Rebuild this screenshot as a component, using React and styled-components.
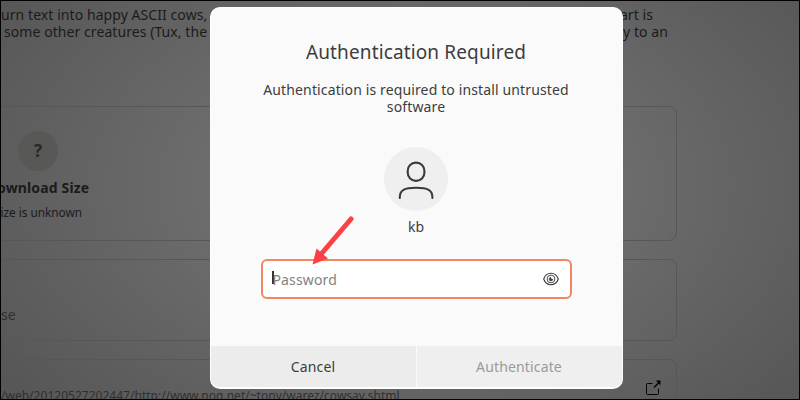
import React from "react";
import styled, { createGlobalStyle } from "styled-components";

const GlobalStyle = createGlobalStyle`
  * { box-sizing: border-box; }
  body { margin: 0; background: #000; font-family: "Noto Sans", "Open Sans", sans-serif; }
`;

const Screen = styled.div`
  position: relative;
  width: 800px;
  height: 400px;
  border: 1px solid #000;
  overflow: hidden;
  background: radial-gradient(ellipse 500px 320px at 410px 185px, #757575 0%, #6c6c6c 42%, #606060 75%, #575757 100%);
`;

const StorePage = styled.main`
  display: flex;
  flex-direction: column;
  width: 676px;
  color: #1b1b1b;
`;

const Summary = styled.section`
  height: 105px;
  padding-top: 5px;
`;

const SummaryLine = styled.div`
  display: flex;
  justify-content: space-between;
  height: 17px;
  line-height: 17px;
  font-size: 14px;
  letter-spacing: 0.07px;
  white-space: pre;
  padding-left: ${(p) => p.$start}px;
  padding-right: ${(p) => p.$end}px;
`;

const Card = styled.section`
  height: ${(p) => p.$height}px;
  margin-bottom: 18px;
  margin-left: -20px;
  padding-left: 19px;
  border: 1px solid #575757;
  border-radius: 8px;
  flex-shrink: 0;
`;

const Tile = styled.div`
  display: flex;
  flex-direction: column;
  align-items: center;
  width: 134px;
  margin-left: -30px;
  padding-top: 24px;
  white-space: nowrap;
`;

const TileBadge = styled.div`
  width: 40px;
  height: 40px;
  border-radius: 50%;
  background: #585856;
  color: #29292a;
  font-size: 17px;
  font-weight: 700;
  line-height: 39px;
  text-align: center;
`;

const TileTitle = styled.div`
  margin-top: 8px;
  height: 18px;
  line-height: 18px;
  font-size: 14px;
  font-weight: 700;
  letter-spacing: 0.15px;
`;

const TileNote = styled.div`
  margin-top: 7px;
  height: 16px;
  line-height: 16px;
  font-size: 11.8px;
`;

const License = styled.div`
  padding-top: 46px;
  line-height: 18px;
  font-size: 14px;
  color: #303030;
`;

const LinkRow = styled.div`
  display: flex;
  justify-content: space-between;
  padding: 20px 15px 0 0;
`;

const Address = styled.div`
  padding-top: 8px;
  line-height: 16px;
  font-size: 12px;
  letter-spacing: 0.02px;
  color: #303030;
  white-space: nowrap;
`;

const Dialog = styled.div`
  position: absolute;
  left: 209px;
  top: 6px;
  width: 413px;
  height: 382px;
  display: flex;
  flex-direction: column;
  border-radius: 10px;
  overflow: hidden;
  background: #fafafa;
  border: 1px solid #fefefe;
  border-bottom-width: 2px;
  color: #3d3d3d;
`;

const DialogBody = styled.div`
  flex: 1;
  display: flex;
  flex-direction: column;
  align-items: center;
  padding-right: 1px;
`;

const Title = styled.h1`
  margin: 30px 0 0;
  height: 28px;
  line-height: 28px;
  font-size: 19px;
  font-weight: 400;
  letter-spacing: 0.13px;
`;

const Message = styled.p`
  margin: 15px 0 0;
  text-align: center;
  font-size: 14px;
  line-height: 17px;
  letter-spacing: 0.13px;
`;

const Avatar = styled.div`
  width: 64px;
  height: 64px;
  margin-top: 32px;
  border-radius: 50%;
  background: #efefef;
`;

const UserName = styled.div`
  margin-top: 7px;
  height: 18px;
  line-height: 18px;
  font-size: 14px;
`;

const PasswordField = styled.div`
  display: flex;
  align-items: center;
  width: 311px;
  height: 40px;
  margin-top: 23px;
  padding: 0 11px 0 9px;
  border: 2px solid #f08763;
  border-radius: 6px;
  background: #fff;
`;

const Caret = styled.span`
  width: 2px;
  height: 13px;
  margin-top: -3px;
  background: #333;
`;

const Placeholder = styled.span`
  flex: 1;
  margin-left: -1px;
  padding-top: 2px;
  font-size: 14px;
  line-height: 18px;
  letter-spacing: 0.15px;
  color: #828282;
`;

const Actions = styled.div`
  display: grid;
  grid-template-columns: 205px 205px;
  gap: 1px;
  height: 41px;
`;

const ActionButton = styled.button`
  border: 0;
  padding: 0 1px 0 0;
  background: ${(p) => (p.disabled ? "#efefef" : "#ececec")};
  color: ${(p) => (p.disabled ? "#9a9a9a" : "#3d3d3d")};
  font: 400 14px/18px "Noto Sans", "Open Sans", sans-serif;
  letter-spacing: 0.15px;
`;

const Pointer = styled.svg`
  position: absolute;
  left: 298.5px;
  top: 203.5px;
`;

const PersonIcon = () => (
  <svg width="64" height="64" viewBox="0 0 64 64" fill="none" stroke="#3b3b3b" strokeWidth="2.1" strokeLinecap="round">
    <rect x="23.7" y="15.6" width="16.7" height="18.3" rx="8.1" />
    <path d="M15.8 51v-1c0-6.8 4.5-9.2 16.3-9.2s16.3 2.4 16.3 9.2v1" />
  </svg>
);

const EyeIcon = () => (
  <svg width="16" height="14" viewBox="0 0 16 14" fill="none" stroke="#3a3a3a">
    <path d="M.7 7C2 3.3 4.6 1.3 8 1.3S14 3.3 15.3 7C14 10.7 11.4 12.7 8 12.7S2 10.7.7 7Z" strokeWidth="1.1" />
    <circle cx="8" cy="7" r="3.9" strokeWidth="0.9" />
    <path d="M7.8 5.2A1.9 1.9 0 1 0 9.9 7.3L8 7Z" fill="#3a3a3a" strokeWidth="0.5" />
  </svg>
);

const ExternalIcon = () => (
  <svg width="16" height="16" viewBox="0 0 16 16" fill="none" stroke="#050505">
    <path d="M7.500 3.500H2.500Q1.500 3.500 1.500 4.500V13.500Q1.500 14.500 2.500 14.500H12.500Q13.500 14.500 13.500 13.500V8.500" strokeWidth="1" />
    <path d="M9 7.500 14 2.500" strokeWidth="1.500" />
    <path d="M10.800.5H15.500V5.200Z" fill="#050505" stroke="none" />
  </svg>
);

export default function App() {
  return (
    <>
      <GlobalStyle />
      <Screen>
        <StorePage>
          <Summary>
            <SummaryLine $start={0} $end={24}>
              <span>urn text into happy ASCII cows, w</span>
              <span>art is</span>
            </SummaryLine>
            <SummaryLine $start={3} $end={9}>
              <span>some other creatures (Tux, the</span>
              <span>y to an</span>
            </SummaryLine>
          </Summary>
          <Card $height={135}>
            <Tile>
              <TileBadge>?</TileBadge>
              <TileTitle>Download Size</TileTitle>
              <TileNote>Size is unknown</TileNote>
            </Tile>
          </Card>
          <Card $height={82}>
            <License>se</License>
          </Card>
          <Card $height={82}>
            <LinkRow>
              <Address>/web/20120527202447/http://www.nog.net/~tony/warez/cowsay.shtml</Address>
              <ExternalIcon />
            </LinkRow>
          </Card>
        </StorePage>
        <Dialog role="dialog">
          <DialogBody>
            <Title>Authentication Required</Title>
            <Message>
              Authentication is required to install untrusted
              <br />
              software
            </Message>
            <Avatar>
              <PersonIcon />
            </Avatar>
            <UserName>kb</UserName>
            <PasswordField>
              <Caret />
              <Placeholder>Password</Placeholder>
              <EyeIcon />
            </PasswordField>
          </DialogBody>
          <Actions>
            <ActionButton>Cancel</ActionButton>
            <ActionButton disabled>Authenticate</ActionButton>
          </Actions>
        </Dialog>
        <Pointer width="60" height="66" viewBox="0 0 60 66">
          <path d="M51 14 22 48" stroke="#fc4145" strokeWidth="5" strokeLinecap="round" />
          <path d="M12.500 59.500 16.500 43.500 28 53.500Z" fill="#fc4145" />
        </Pointer>
      </Screen>
    </>
  );
}
